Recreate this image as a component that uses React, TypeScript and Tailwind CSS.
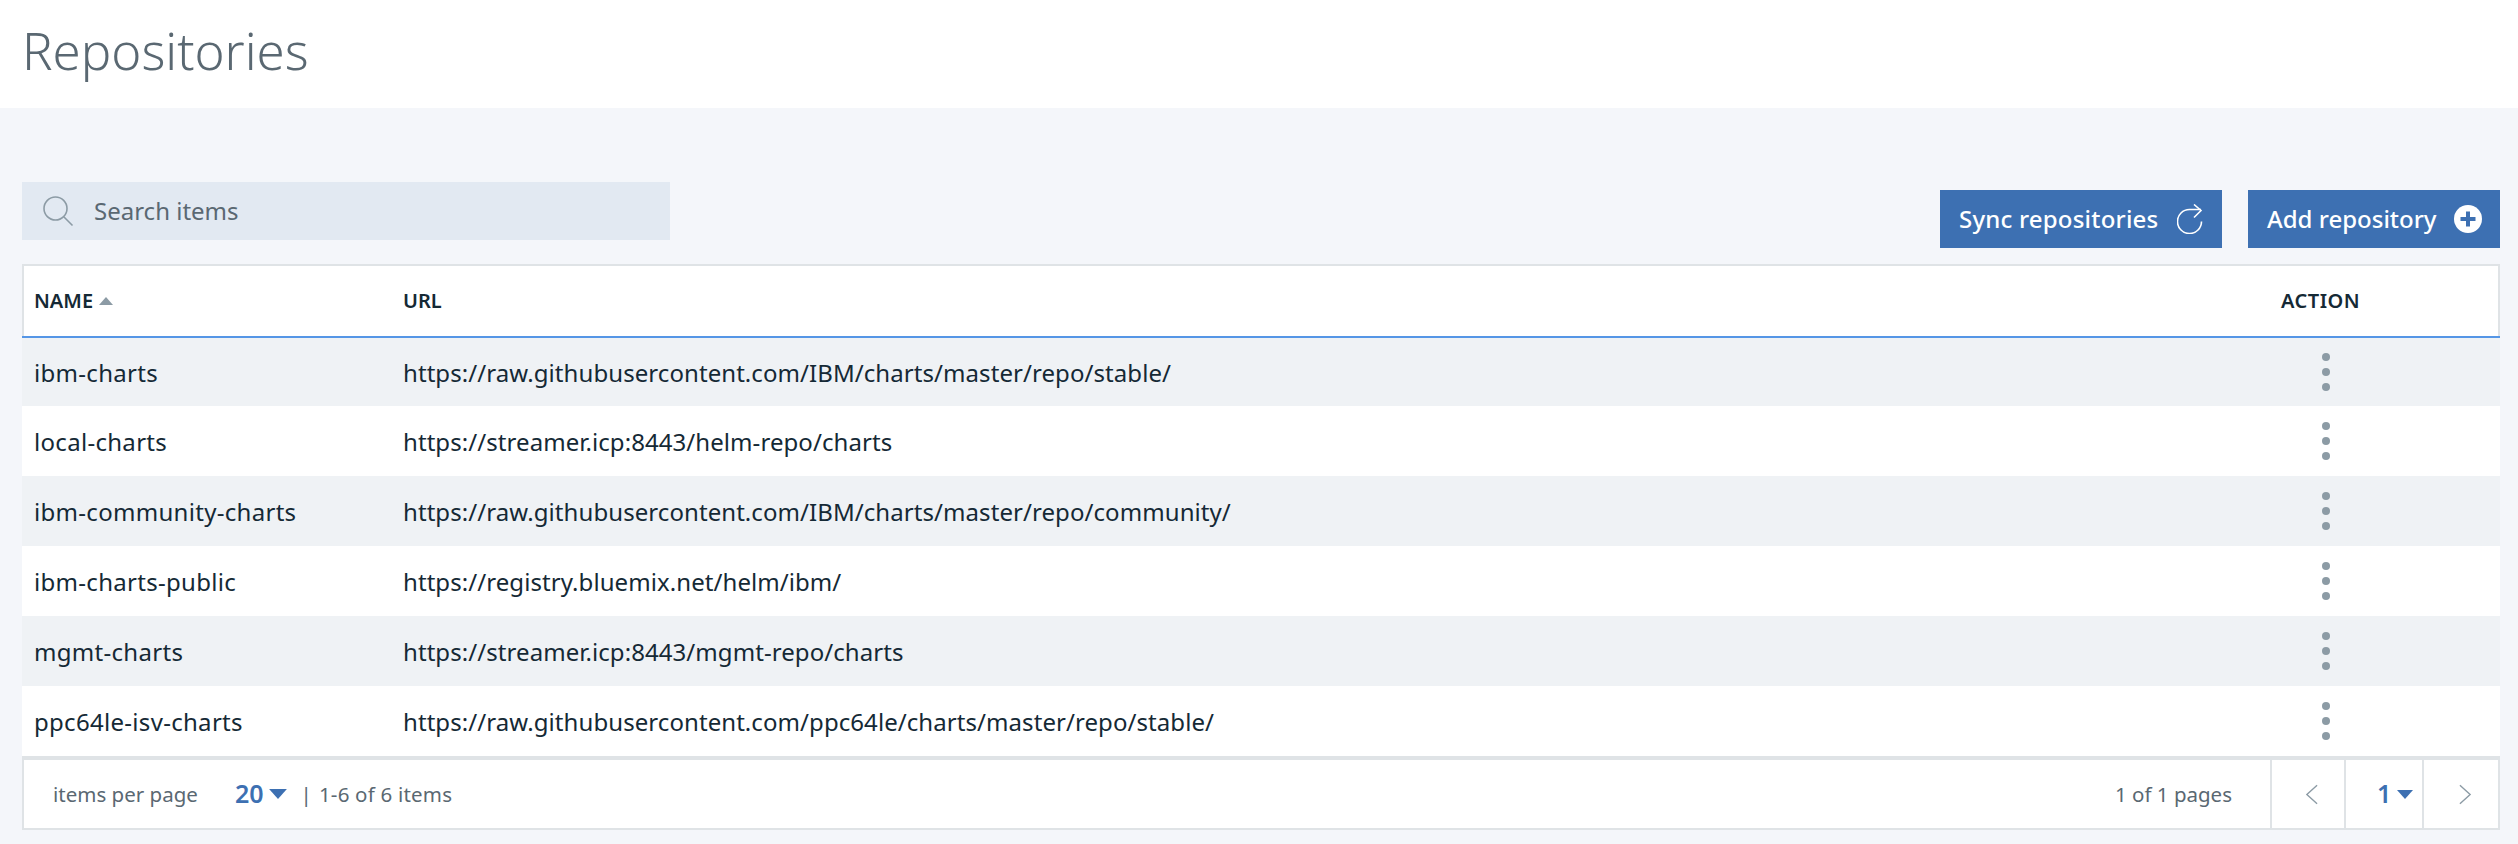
const rows = [
  ["ibm-charts", "https://raw.githubusercontent.com/IBM/charts/master/repo/stable/"],
  ["local-charts", "https://streamer.icp:8443/helm-repo/charts"],
  ["ibm-community-charts", "https://raw.githubusercontent.com/IBM/charts/master/repo/community/"],
  ["ibm-charts-public", "https://registry.bluemix.net/helm/ibm/"],
  ["mgmt-charts", "https://streamer.icp:8443/mgmt-repo/charts"],
  ["ppc64le-isv-charts", "https://raw.githubusercontent.com/ppc64le/charts/master/repo/stable/"],
];

const Caret = ({ className }: { className: string }) => (
  <svg viewBox="0 0 16 9" className={className} fill="currentColor">
    <path d="M0 0h16L8 9z" />
  </svg>
);

const Dots = () => (
  <div className="flex flex-col gap-[7px]">
    <span className="w-[8px] h-[8px] rounded-full bg-[#8c9ba5]" />
    <span className="w-[8px] h-[8px] rounded-full bg-[#8c9ba5]" />
    <span className="w-[8px] h-[8px] rounded-full bg-[#8c9ba5]" />
  </div>
);

const App = () => {
  return (
    <div className="w-[2518px] h-[844px] bg-[#f4f6fa] font-['Noto_Sans',sans-serif] text-[#152935] overflow-hidden">
      {/* Page title */}
      <div className="h-[108px] bg-white pl-[22px] pt-[16px]">
        <h1 className="text-[51px] leading-[68px] font-light text-[#5a6872]">Repositories</h1>
      </div>

      <div className="pr-[18px] pl-[22px]">
        {/* Toolbar */}
        <div className="flex justify-between h-[156px] pt-[74px]">
          <div className="w-[648px] h-[58px] bg-[#e2e9f2] flex items-center pl-[20px]">
            <svg viewBox="0 0 32 32" className="w-[32px] h-[32px] text-[#8c9ba5]" fill="none" stroke="currentColor" strokeWidth="1.6">
              <circle cx="13.5" cy="13.5" r="11.5" />
              <path d="M22 22l8.5 8.5" />
            </svg>
            <span className="ml-[20px] text-[24px] text-[#5a6872]">Search items</span>
          </div>
          <div className="flex gap-[26px] pt-[8px]">
            <button className="w-[282px] h-[58px] bg-[#3d70b2] text-white text-[24px] tracking-[0.2px] font-medium flex items-center justify-between pl-[19px] pr-[19px]">
              Sync repositories
              <svg viewBox="0 0 26 30" className="w-[26px] h-[30px]" fill="none" stroke="currentColor" strokeWidth="1.6">
                <path d="M24.5 17.5a12 12 0 1 1-12-12H24" />
                <path d="M17 0.5L24 6.5l-7 7" />
              </svg>
            </button>
            <button className="w-[252px] h-[58px] bg-[#3d70b2] text-white text-[24px] font-medium flex items-center justify-between pl-[19px] pr-[18px]">
              Add repository
              <svg viewBox="0 0 28 28" className="w-[28px] h-[28px]">
                <circle cx="14" cy="14" r="14" fill="#ffffff" />
                <path d="M14 6.5v15M6.5 14h15" stroke="#3d70b2" strokeWidth="4" />
              </svg>
            </button>
          </div>
        </div>

        {/* Table */}
        <div className="border-x-2 border-t-2 border-[#dfe3e6] bg-white h-[72px] flex items-center text-[20px] font-semibold">
          <div className="w-[379px] pl-[10px] flex items-center gap-[6px]">
            NAME
            <svg viewBox="0 0 14 8" className="w-[14px] h-[8px] text-[#8c9ba5]" fill="currentColor"><path d="M7 0l7 8H0z" /></svg>
          </div>
          <div className="flex-1">URL</div>
          <div className="w-[217px] tracking-[0.5px]">ACTION</div>
        </div>
        {rows.map(([name, url], i) => (
          <div key={name} className={`h-[70px] flex items-center text-[24px] ${i === 0 ? "border-t-2 border-[#5596e6]" : ""} ${i % 2 === 0 ? "bg-[#eff2f5]" : "bg-white"}`}>
            <div className="w-[381px] pl-[12px] pt-[2px] tracking-[0.3px]">{name}</div>
            <div className="flex-1 pt-[2px] tracking-[0.07px]">{url}</div>
            <div className="w-[178px]">
              <Dots />
            </div>
          </div>
        ))}

        {/* Footer */}
        <div className="h-[74px] border-2 border-t-4 border-[#dfe3e6] bg-white flex items-center text-[20.5px] text-[#5a6872]">
          <span className="ml-[29px] w-[182px] pt-[1px]">items per page</span>
          <span className="text-[25px] font-semibold text-[#3d70b2]">20</span>
          <Caret className="w-[18px] h-[10px] ml-[5px] text-[#3d70b2]" />
          <span className="ml-[14px]">|</span>
          <span className="ml-[7px] pt-[1px] tracking-[0.2px]">1-6 of 6 items</span>
          <span className="ml-auto mr-[38px] pt-[1px]">1 of 1 pages</span>
          <div className="w-[74px] h-full border-l-2 border-[#dfe3e6] flex items-center justify-center pl-[6px] text-[#8c9ba5]">
            <svg viewBox="0 0 14 22" className="w-[13px] h-[21px]" fill="none" stroke="currentColor" strokeWidth="1.5"><path d="M13 1L2 11l11 10" /></svg>
          </div>
          <div className="w-[78px] h-full border-l-2 border-[#dfe3e6] flex items-center pl-[31px] text-[#3d70b2]">
            <span className="text-[25px] font-semibold">1</span>
            <Caret className="w-[16px] h-[9px] ml-[6px] text-[#3d70b2]" />
          </div>
          <div className="w-[76px] h-full border-l-2 border-[#dfe3e6] flex items-center justify-center pl-[8px] text-[#8c9ba5]">
            <svg viewBox="0 0 14 22" className="w-[13px] h-[21px]" fill="none" stroke="currentColor" strokeWidth="1.5"><path d="M1 1l11 10L1 21" /></svg>
          </div>
        </div>
      </div>
    </div>
  );
};

export default App;
